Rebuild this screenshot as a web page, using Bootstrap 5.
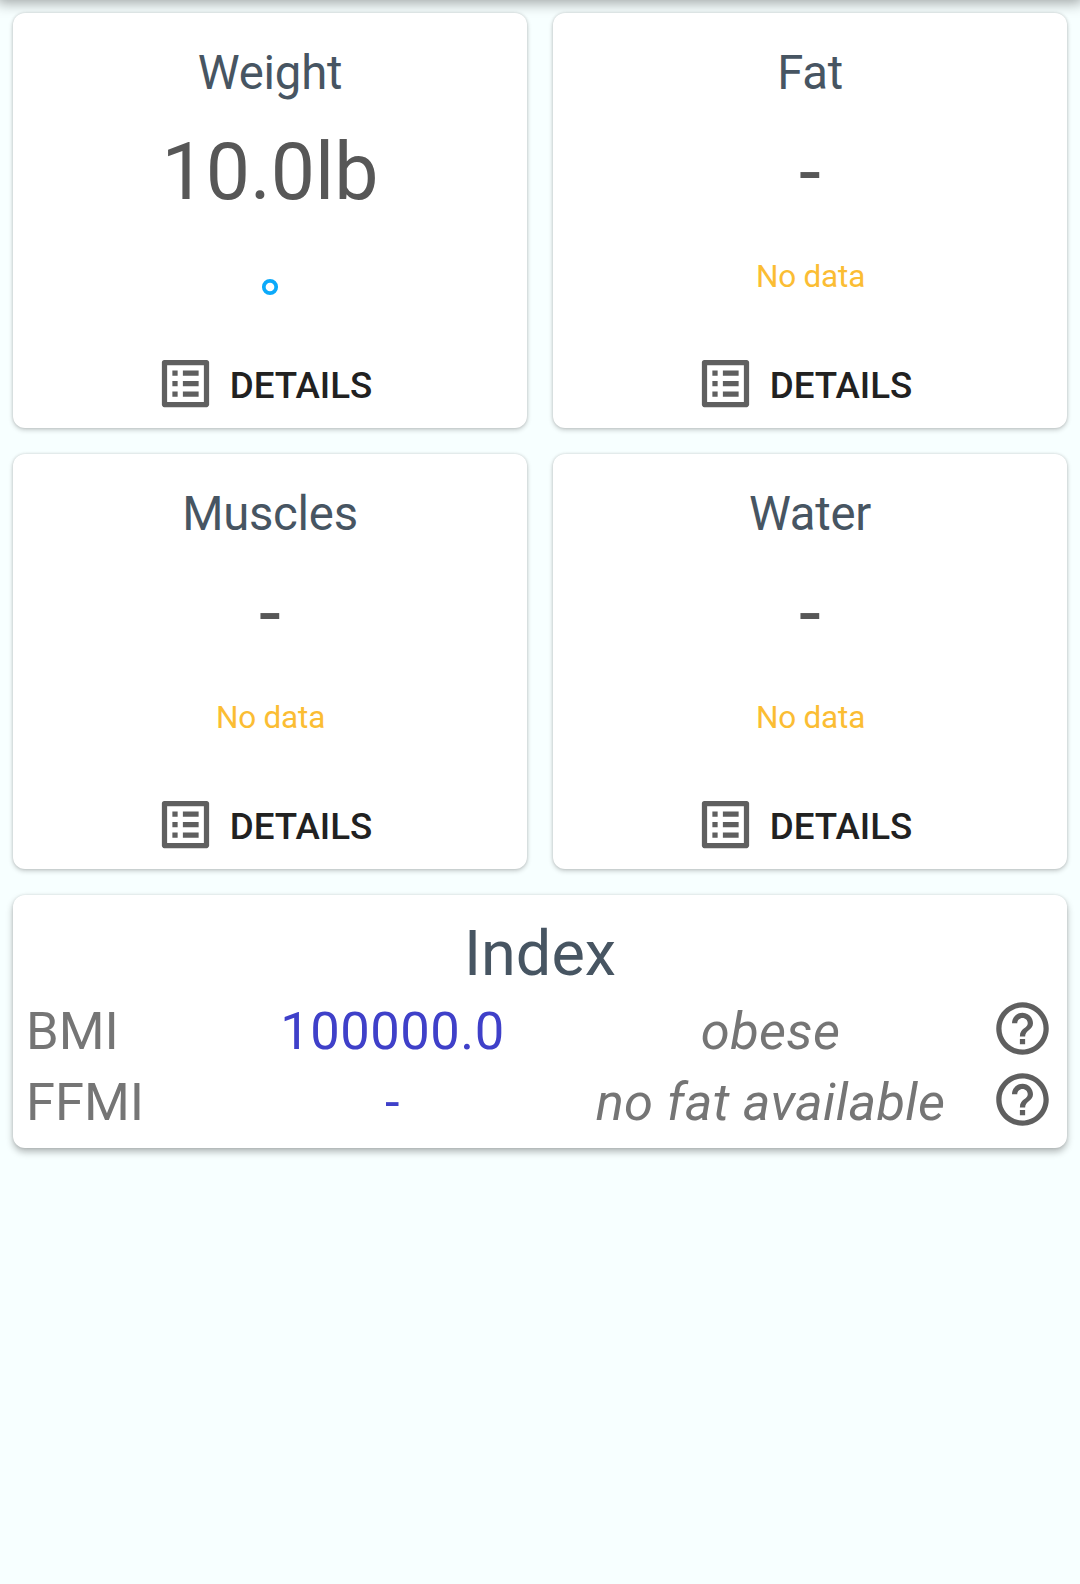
<!DOCTYPE html>
<html lang="en">
<head>
<meta charset="utf-8">
<meta name="viewport" content="width=device-width, initial-scale=1">
<title>Body measures</title>
<link href="https://cdn.jsdelivr.net/npm/bootstrap@5.3.0/dist/css/bootstrap.min.css" rel="stylesheet">
<style>
body{background:#f7ffff;font-family:Roboto,sans-serif;min-height:1584px;overflow:hidden}
.appbar-edge{height:30px;margin-top:-30px;box-shadow:0 0 14px 3px rgba(0,0,0,.36)}
.dash{padding:13px;display:grid;grid-template-columns:1fr 1fr;gap:26px}
.dash .card{border:0;border-radius:12px;background:#fff;box-shadow:0 2px 5px rgba(0,0,0,.2),0 0 3px rgba(0,0,0,.14)}
.measure{height:415px}
.dash .card.index-card{grid-column:1/3;height:253px;padding:0 13px;box-shadow:0 4px 7px rgba(0,0,0,.28),0 0 3px rgba(0,0,0,.12)}
.m-title{font-size:47.25px;line-height:56px;letter-spacing:-.25px;color:#475562;margin-top:32px}
.m-value{font-size:78.75px;line-height:92px;color:#575757;margin-top:25px}
.m-note{height:110px;padding-top:40px;font-size:31.5px;line-height:38px;letter-spacing:-.2px;color:#fbbd33}
.m-note span{padding-left:1px}
.m-dot{display:block;margin-top:20px}
.m-btn{font-size:36.75px;line-height:44px;font-weight:500;color:#212121;padding:0;border:0;margin-right:14px;gap:13px}
.m-btn span{padding-top:5px}
.m-icon{width:63px;height:63px;fill:#5f5f5f;display:block}
.i-title{font-size:63px;line-height:74px;color:#475562;margin-top:22px;margin-bottom:2px}
.i-row{display:grid;grid-template-columns:209px 314px 442px 63px;height:71px;align-items:center;font-size:52.5px;line-height:62px;color:#757575}
.i-row span,.i-row em{padding-top:5px}
.i-row em{letter-spacing:.3px;padding-left:1px}
.i-row .i-num{color:#3f40c9;letter-spacing:.5px;padding-left:1px}
</style>
</head>
<body>
<svg class="d-none" xmlns="http://www.w3.org/2000/svg">
<symbol id="list" viewBox="0 0 24 24"><path d="M11 7h6v2h-6zm0 4h6v2h-6zm0 4h6v2h-6zM7 7h2v2H7zm0 4h2v2H7zm0 4h2v2H7zM20.1 3H3.9c-.5 0-.9.4-.9.9v16.2c0 .4.4.9.9.9h16.2c.4 0 .9-.5.9-.9V3.9c0-.5-.5-.9-.9-.9zM19 19H5V5h14v14z"/></symbol>
<symbol id="help" viewBox="0 0 24 24"><path d="M11 18h2v-2h-2v2zm1-16C6.48 2 2 6.48 2 12s4.48 10 10 10 10-4.48 10-10S17.52 2 12 2zm0 18c-4.41 0-8-3.59-8-8s3.59-8 8-8 8 3.59 8 8-3.59 8-8 8zm0-14c-2.21 0-4 1.79-4 4h2c0-1.1.9-2 2-2s2 .9 2 2c0 2-3 1.75-3 5h2c0-2.25 3-2.5 3-5 0-2.21-1.79-4-4-4z"/></symbol>
</svg>
<div class="appbar-edge"></div>
<main class="dash">
<section class="card measure align-items-center">
<div class="m-title">Weight</div><div class="m-value">10.0lb</div>
<div class="m-note"><svg class="m-dot" width="18" height="18" viewBox="0 0 18 18"><circle cx="9" cy="9" r="6.2" fill="none" stroke="#0caafa" stroke-width="3.7"/></svg></div>
<button class="btn m-btn d-flex align-items-center mt-4"><svg class="m-icon"><use href="#list"/></svg><span>DETAILS</span></button>
</section>
<section class="card measure align-items-center">
<div class="m-title">Fat</div><div class="m-value">-</div>
<div class="m-note"><span>No data</span></div>
<button class="btn m-btn d-flex align-items-center mt-4"><svg class="m-icon"><use href="#list"/></svg><span>DETAILS</span></button>
</section>
<section class="card measure align-items-center">
<div class="m-title">Muscles</div><div class="m-value">-</div>
<div class="m-note"><span>No data</span></div>
<button class="btn m-btn d-flex align-items-center mt-4"><svg class="m-icon"><use href="#list"/></svg><span>DETAILS</span></button>
</section>
<section class="card measure align-items-center">
<div class="m-title">Water</div><div class="m-value">-</div>
<div class="m-note"><span>No data</span></div>
<button class="btn m-btn d-flex align-items-center mt-4"><svg class="m-icon"><use href="#list"/></svg><span>DETAILS</span></button>
</section>
<section class="card index-card">
<div class="i-title text-center">Index</div>
<div class="i-row"><span>BMI</span><span class="i-num text-center">100000.0</span><em class="text-center">obese</em><svg class="m-icon"><use href="#help"/></svg></div>
<div class="i-row"><span>FFMI</span><span class="i-num text-center">-</span><em class="text-center">no fat available</em><svg class="m-icon"><use href="#help"/></svg></div>
</section>
</main>
<script src="https://cdn.jsdelivr.net/npm/bootstrap@5.3.0/dist/js/bootstrap.bundle.min.js"></script>
</body>
</html>
